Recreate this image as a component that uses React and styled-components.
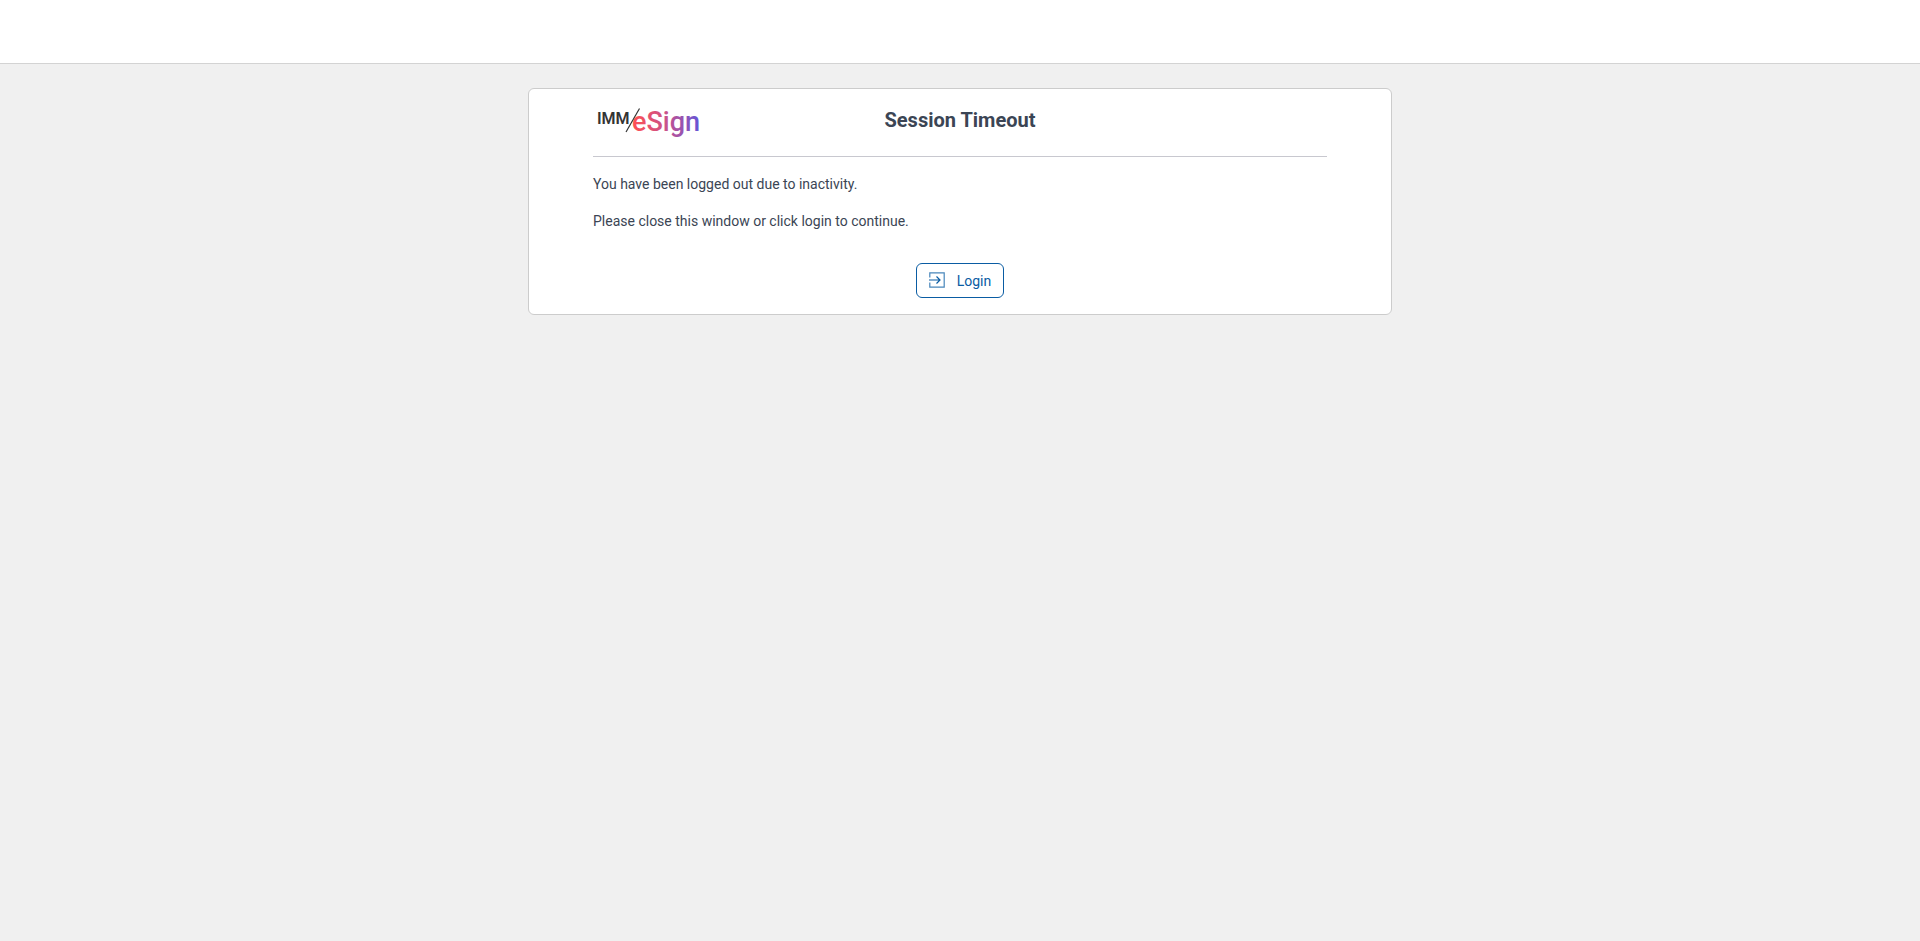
import React from "react";
import styled, { createGlobalStyle } from "styled-components";

const GlobalStyle = createGlobalStyle`
  * {
    box-sizing: border-box;
  }

  body {
    margin: 0;
    background-color: #f0f0f0;
    color: #3b4554;
    font-family: Roboto, sans-serif;
    font-size: 14px;
    line-height: 20px;
  }
`;

const TopBar = styled.header`
  height: 64px;
  background-color: white;
  border-bottom: 1px solid #d3d3d3;
`;

const Card = styled.main`
  width: 45%;
  min-width: 480px;
  margin: 24px auto;
  padding: 16px 64px;
  background-color: white;
  border: 1px solid #ccc;
  border-radius: 6px;
`;

const CardHeader = styled.div`
  display: grid;
  grid-template-columns: 1fr auto 1fr;
  align-items: start;
  height: 52px;
  border-bottom: 1px solid #c8c8cf;
`;

const Logo = styled.svg`
  display: block;
  width: 112px;
  height: 36px;
  overflow: visible;
`;

const Title = styled.h1`
  margin: 0;
  font-size: 20px;
  line-height: 30px;
  font-weight: 700;
`;

const Message = styled.p`
  margin: 17px 0;
`;

const Actions = styled.div`
  display: flex;
  justify-content: center;
  padding-top: 15px;
`;

const LoginButton = styled.button`
  display: flex;
  align-items: center;
  gap: 12px;
  height: 35px;
  padding: 0 12px;
  background-color: white;
  border: 1px solid #0a5ca3;
  border-radius: 6px;
  color: #0a5ca3;
  font-family: inherit;
  font-size: 14px;
  cursor: pointer;

  svg {
    display: block;
    width: 16px;
    height: 17px;
  }
`;

function EsignLogo() {
  return (
    <Logo viewBox="0 0 112 36" role="img" aria-label="IMM/eSign">
      <defs>
        <linearGradient
          id="esign"
          gradientUnits="userSpaceOnUse"
          x1="40"
          y1="0"
          x2="106"
          y2="0"
        >
          <stop offset="0" stopColor="#ff5053" />
          <stop offset="0.5" stopColor="#c9528c" />
          <stop offset="1" stopColor="#6655d6" />
        </linearGradient>
      </defs>
      <text
        x="4"
        y="19"
        fontFamily="Roboto, sans-serif"
        fontSize="16"
        fontWeight="600"
        fill="#333"
      >
        IMM
      </text>
      <path d="M33 27 46.5 3.5" stroke="#333" strokeWidth="1.2" />
      <text
        x="39"
        y="26"
        fontFamily="Roboto, sans-serif"
        fontSize="27"
        fontWeight="500"
        fill="url(#esign)"
      >
        eSign
      </text>
    </Logo>
  );
}

function LoginIcon() {
  return (
    <svg viewBox="0 0 16 17" fill="none" stroke="#0a5ca3" aria-hidden="true">
      <path d="M.8 5.5V.8h14.4v14.4H.8v-4.7" strokeWidth="1.2" opacity="0.75" />
      <path d="M0 8h11M7.5 4.5 11 8l-3.5 3.5" strokeWidth="1.2" />
    </svg>
  );
}

function App() {
  return (
    <>
      <GlobalStyle />
      <TopBar />
      <Card>
        <CardHeader>
          <EsignLogo />
          <Title>Session Timeout</Title>
        </CardHeader>
        <Message>You have been logged out due to inactivity.</Message>
        <Message>Please close this window or click login to continue.</Message>
        <Actions>
          <LoginButton type="button">
            <LoginIcon />
            Login
          </LoginButton>
        </Actions>
      </Card>
    </>
  );
}

export default App;
